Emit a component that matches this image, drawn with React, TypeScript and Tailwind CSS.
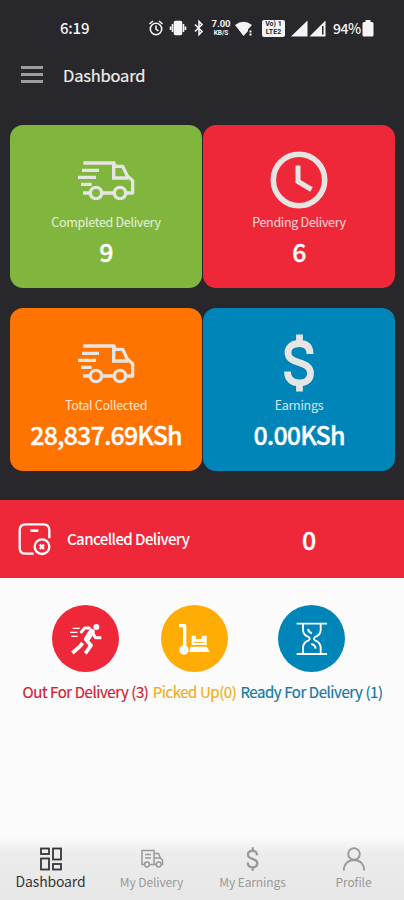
import type { ReactNode } from 'react';

// ── Icons ─────────────────────────────────────────────────────────────────────

function TruckIcon() {
  return (
    <svg className="w-[58px] h-[42px]" viewBox="231 129 174 126" fill="none" stroke="currentColor" strokeWidth="10">
      <path d="M250 141H342L346 151H368L382 180L398 194V231H380" strokeLinejoin="round" />
      <path d="M341 142V186H384" />
      <path d="M246 163H297M234 184H288M243 205H275M249 231H270M306 231H342" />
      <circle cx="288" cy="231" r="17" />
      <circle cx="360" cy="231" r="17" />
    </svg>
  );
}

function ClockIcon() {
  return (
    <svg className="w-[58px] h-[58px]" viewBox="0 0 58 58" fill="none" stroke="currentColor">
      <circle cx="29" cy="29" r="25.700" strokeWidth="5.600" />
      <path d="M28 14.500V30.500L41.500 38.500" strokeWidth="5" />
    </svg>
  );
}

function DollarIcon({ className, weight }: { className: string; weight: number }) {
  return (
    <svg className={className} viewBox="0 0 30 58" fill="none" stroke="currentColor" strokeWidth={weight}>
      <path d="M26 20C26 12.500 22 9.500 15.500 9.500C8.500 9.500 4 13 4 18.500C4 24.500 8.500 26.500 15 28.500C22 30.700 26.500 33 26.500 39.500C26.500 45.500 22 49 15.500 49C8 49 3.500 45 3.500 37.500" />
      <path d="M15.500 0.500V10M15.500 48V57.500" />
    </svg>
  );
}

function CancelledIcon() {
  return (
    <svg className="w-[35px] h-[34px]" viewBox="50 94 105 102" fill="none" stroke="currentColor" strokeWidth="7">
      <path d="M100 189H76Q58 189 58 171V119Q58 101 76 101H129Q147 101 147 119V143" />
      <path d="M90 120H114" strokeWidth="8" />
      <circle cx="125" cy="168" r="22" />
      <path d="M118 162L131 175M131 162L118 175" strokeWidth="7" />
    </svg>
  );
}

function RunnerIcon() {
  return (
    <svg className="w-[34px] h-[34px]" viewBox="205 80 102 102" fill="none" stroke="currentColor">
      <circle cx="287" cy="95" r="9" fill="currentColor" stroke="none" />
      <path d="M266 98L252 98L242 110" strokeWidth="9" strokeLinecap="round" strokeLinejoin="round" />
      <path d="M273 109L259 131" strokeWidth="18" strokeLinecap="round" />
      <path d="M276 112L284 127H302" strokeWidth="9" strokeLinejoin="round" />
      <path d="M258 136L271 150L254 174" strokeWidth="11" strokeLinejoin="round" />
      <path d="M246 143L237 154L215 173" strokeWidth="11" />
      <path d="M216 99H237M208 111H230M212 123H231" strokeWidth="4" />
    </svg>
  );
}

function TrolleyIcon() {
  return (
    <svg className="w-[34px] h-[34px]" viewBox="536 80 102 102" fill="none" stroke="currentColor">
      <path d="M539 91H556V154" strokeWidth="10" strokeLinejoin="round" />
      <circle cx="554" cy="164" r="14" fill="currentColor" stroke="none" />
      <path d="M574 154H622L632 170H570Z" fill="currentColor" stroke="none" />
      <path d="M577 121H590V131H607V121H622V149H577Z" fill="currentColor" stroke="none" />
      <path d="M584 141H615" stroke="#ffad05" strokeWidth="3" />
    </svg>
  );
}

function HourglassIcon() {
  return (
    <svg className="w-[34px] h-[36px]" viewBox="279 79 102 108" fill="none" stroke="currentColor" strokeWidth="5.500">
      <path d="M284 87H375M284 178H375" />
      <path d="M303 88V107Q304 121 320 127Q326 132 320 137Q304 143 303 158V177M356 88V107Q355 121 339 127Q333 132 339 137Q355 143 356 158V177" />
      <path d="M318 103Q320 113 330 116" strokeWidth="6" />
      <path d="M328 148Q340 151 341 162" strokeWidth="6" />
    </svg>
  );
}

function GridIcon() {
  return (
    <svg className="w-6 h-6" viewBox="0 0 24 24" fill="none" stroke="currentColor" strokeWidth="1.800">
      <rect x="2" y="1.500" width="8" height="5.500" />
      <rect x="14" y="1.500" width="8" height="11" />
      <rect x="2" y="11.500" width="8" height="11" />
      <rect x="14" y="17" width="8" height="5.500" />
    </svg>
  );
}

function NavTruckIcon() {
  return (
    <svg className="w-6 h-6" viewBox="0 0 24 24" fill="none" stroke="currentColor" strokeWidth="1.500">
      <path d="M4 17.500H2V3.500H14V17.500H10M14 6.500H18.500L20.500 11L22.500 13V17.500H21.500M14 11H20.500M14.500 17.500H16" />
      <path d="M5 7.500H11M5 11H11" />
      <circle cx="7" cy="17.500" r="2.400" />
      <circle cx="18.700" cy="17.500" r="2.400" />
    </svg>
  );
}

function ProfileIcon() {
  return (
    <svg className="w-6 h-6" viewBox="0 0 24 24" fill="none" stroke="currentColor" strokeWidth="1.900">
      <circle cx="12" cy="7" r="5.800" />
      <path d="M1.800 23.500C1.800 17 6 13 12 13S22.200 17 22.200 23.500" />
    </svg>
  );
}

// ── Status bar ────────────────────────────────────────────────────────────────

function StatusBar() {
  return (
    <div className="h-14 shrink-0 flex items-center pl-[60px] text-[#f4f4f4]">
      <span className="w-[88px] text-[15px] leading-5 font-medium tracking-[-0.2px]">6:19</span>
      {/* alarm, vibrate, bluetooth */}
      <svg className="w-[58px] h-[18px] shrink-0" viewBox="0 0 58 18" fill="none" stroke="currentColor" strokeWidth="1.600">
        <circle cx="8" cy="10" r="5.700" />
        <path d="M1.500 5L5 2M14.500 5L11 2M8 6.500V10L10.500 12" />
        <rect x="26.500" y="2.500" width="7" height="13" rx="1" fill="currentColor" />
        <path d="M24.500 5V13M22.500 7.500V11M35.500 5V13M37.500 7.500V11" />
        <path d="M47 5.500L54 12.500L51 15.500V2.500L54 5.500L47 12.500" />
      </svg>
      <span className="ml-[5px] w-5 flex flex-col items-center font-bold font-[Roboto,sans-serif]">
        <span className="text-[9.500px] leading-[10px]">7.00</span>
        <span className="text-[6.500px] leading-[8px]">KB/S</span>
      </span>
      <svg className="ml-[4px] w-[19px] h-[18px] shrink-0" viewBox="0 0 19 18" fill="currentColor">
        <path d="M0 6Q8.500-.5 17 6L13 10.500V12L8.500 17Z" />
        <path d="M14.500 11.500H16.500V13.500H14.500ZM14.500 14.500H16.500V16.500H14.500Z" />
      </svg>
      <span className="ml-[8px] w-[23px] h-[17px] shrink-0 rounded-[2px] bg-[#f4f4f4] text-[#28272c] flex flex-col items-center justify-center font-bold font-[Roboto,sans-serif] text-[7px] leading-[8px]">
        <span>Vo) 1</span>
        <span>LTE2</span>
      </span>
      <svg className="ml-[6px] w-[36px] h-[17px] shrink-0" viewBox="0 0 36 17" fill="currentColor">
        <path d="M0 16.500L16.500 .5V16.500Z" />
        <path d="M18.500 16.500L34.500 .5V16.500Z" />
        <path d="M31.800 6V14.500" stroke="#28272c" strokeWidth="1.500" />
      </svg>
      <span className="ml-[6px] w-[28px] text-[14px] leading-5 font-medium tracking-[-0.5px]">94%</span>
      <svg className="ml-[1px] w-[12px] h-[17px] shrink-0" viewBox="0 0 12 17" fill="currentColor">
        <path d="M3.500 0H8.500V2H10Q11.500 2 11.500 3.500V15Q11.500 16.500 10 16.500H2Q.5 16.500 .5 15V3.500Q.5 2 2 2H3.500Z" />
      </svg>
    </div>
  );
}

// ── Cards ─────────────────────────────────────────────────────────────────────

interface StatCardProps {
  color: string;
  icon: ReactNode;
  label: string;
  value: string;
}

function StatCard({ color, icon, label, value }: StatCardProps) {
  return (
    <div className={`h-[163px] rounded-[13px] flex flex-col items-center text-white ${color}`}>
      <div className="mt-[25px] h-[60px] flex items-center justify-center text-[#e6e5e3]">{icon}</div>
      <span className="mt-[2px] text-[12.500px] leading-5 tracking-[-0.3px] text-white/80">{label}</span>
      <span className="mt-[3px] text-[25px] leading-8 font-medium tracking-[-0.85px] whitespace-nowrap [-webkit-text-stroke:0.3px_white]">
        {value}
      </span>
    </div>
  );
}

interface StageProps {
  width: string;
  circle: string;
  text: string;
  icon: ReactNode;
  label: string;
}

function Stage({ width, circle, text, icon, label }: StageProps) {
  return (
    <div className={`flex flex-col items-center ${width}`}>
      <div className={`w-[67px] h-[67px] rounded-full flex items-center justify-center text-white ${circle}`}>{icon}</div>
      <span className={`mt-[10px] text-[15px] leading-5 tracking-[-0.43px] whitespace-nowrap [-webkit-text-stroke:0.2px_currentColor] ${text}`}>
        {label}
      </span>
    </div>
  );
}

function NavItem({ icon, label, active }: { icon: ReactNode; label: string; active?: boolean }) {
  return (
    <div className={`w-[101px] flex flex-col items-center ${active ? 'text-[#363636]' : 'text-[#999]'}`}>
      {icon}
      <span className={active ? 'text-[14px] leading-5 tracking-[-0.15px]' : 'mt-[1px] text-[12px] leading-5 tracking-[-0.1px]'}>
        {label}
      </span>
    </div>
  );
}

export default function App() {
  return (
    <div className="w-[404px] h-[900px] overflow-hidden flex flex-col bg-[#fbfbfb] font-['Noto_Sans_CJK_SC','Noto_Sans',sans-serif]">
      <div className="h-[500px] shrink-0 bg-[#28272c] flex flex-col">
        <StatusBar />
        <header className="h-[37px] flex items-center pl-[21px] gap-[20px]">
          <div className="w-[22px] flex flex-col gap-[4px]">
            <span className="h-[3px] bg-[#9c9c9e]" />
            <span className="h-[3px] bg-[#9c9c9e]" />
            <span className="h-[3px] bg-[#9c9c9e]" />
          </div>
          <h1 className="text-[16.500px] leading-6 tracking-[-0.2px] text-[#eee] [-webkit-text-stroke:0.2px_currentColor]">Dashboard</h1>
        </header>
        <div className="mt-[32px] pl-[10px] pr-[9px] grid grid-cols-2 gap-x-[1px] gap-y-[20px]">
          <StatCard color="bg-[#80b63e]" icon={<TruckIcon />} label="Completed Delivery" value="9" />
          <StatCard color="bg-[#ee2739]" icon={<ClockIcon />} label="Pending Delivery" value="6" />
          <StatCard color="bg-[#ff7300]" icon={<TruckIcon />} label="Total Collected" value="28,837.69KSh" />
          <StatCard color="bg-[#0085b8]" icon={<DollarIcon className="w-[30px] h-[58px]" weight={6.8} />} label="Earnings" value="0.00KSh" />
        </div>
      </div>

      <div className="h-[78px] shrink-0 bg-[#ee2739] text-white flex items-center pl-[17px]">
        <CancelledIcon />
        <span className="ml-[15px] w-[235px] text-[15px] leading-6 font-medium tracking-[-0.58px]">Cancelled Delivery</span>
        <span className="text-[25px] leading-8 font-medium [-webkit-text-stroke:0.3px_white]">0</span>
      </div>

      <div className="pt-[27px] pl-[22px] flex">
        <Stage width="w-[127px]" circle="bg-[#ee2739]" text="text-[#cf2233]" icon={<RunnerIcon />} label="Out For Delivery (3)" />
        <Stage width="w-[91px]" circle="bg-[#ffad05]" text="text-[#f2ad1c]" icon={<TrolleyIcon />} label="Picked Up(0)" />
        <Stage width="w-[143px]" circle="bg-[#0085b8]" text="text-[#1179a3]" icon={<HourglassIcon />} label="Ready For Delivery (1)" />
      </div>

      <nav className="mt-auto h-[63px] shrink-0 pt-[10px] flex bg-linear-to-b from-[#fbfbfb] via-[#ececec] via-25% to-[#e7e7e7]">
        <NavItem active icon={<GridIcon />} label="Dashboard" />
        <NavItem icon={<NavTruckIcon />} label="My Delivery" />
        <NavItem icon={<DollarIcon className="w-[13px] h-6" weight={5.5} />} label="My Earnings" />
        <NavItem icon={<ProfileIcon />} label="Profile" />
      </nav>
    </div>
  );
}
